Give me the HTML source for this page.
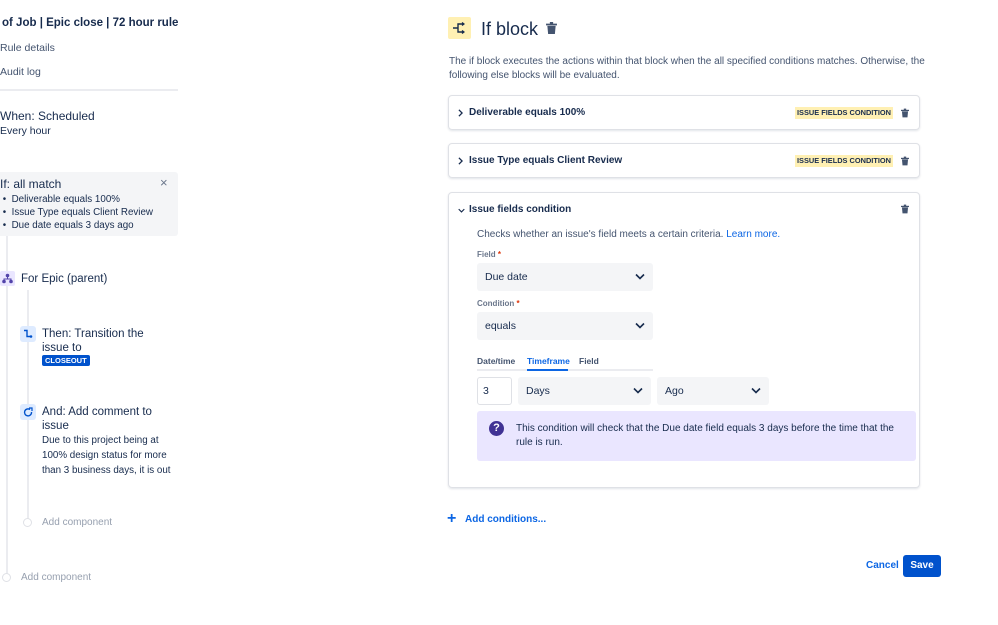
<!DOCTYPE html>
<html><head><meta charset="utf-8"><style>
*{box-sizing:border-box;margin:0;padding:0}
body{width:998px;height:625px;background:#fff;font-family:"Liberation Sans",sans-serif;color:#172b4d;position:relative;overflow:hidden}
.a{position:absolute;white-space:nowrap}
.s{font-size:10.5px;color:#44546f}
.card{position:absolute;left:448px;width:472px;border:1px solid #dfe1e6;border-radius:4px;box-shadow:0 1px 2px rgba(9,30,66,.12)}
.ct{position:absolute;left:20px;font-size:10px;font-weight:bold;color:#172b4d}
.badge{position:absolute;left:346px;width:98px;text-align:center;background:#fff0b3;font-size:7.4px;font-weight:bold;color:#172b4d;height:12px;line-height:12px}
.sel{position:absolute;background:#f4f5f7;border-radius:3px;font-size:10.5px;color:#172b4d;padding-left:8px}
.chev{position:absolute;right:8px;top:50%;margin-top:-4px}
.lbl{font-size:8px;font-weight:bold;color:#6b778c}
.ic{position:absolute;background:#deebff;border-radius:3px}
</style></head><body>
<svg width="0" height="0" style="position:absolute"><defs>
<symbol id="tr" viewBox="0 0 10 11"><rect x="0" y="1.5" width="10" height="1.6" fill="#44546f"/><rect x="3.5" y="0" width="3" height="2" fill="#44546f"/><path d="M1.2 3.5h7.6l-.7 7.5H1.9z" fill="#44546f"/></symbol>
<symbol id="dn" viewBox="0 0 10 6"><path d="M1 1l4 4 4-4" stroke="#172b4d" stroke-width="1.6" fill="none"/></symbol>
<symbol id="rt" viewBox="0 0 6 10"><path d="M1 1l4 4-4 4" stroke="#172b4d" stroke-width="1.6" fill="none"/></symbol>
</defs></svg>

<!-- left -->
<div class="a" style="left:2px;top:17px;font-size:11.5px;font-weight:bold">of Job | Epic close | 72 hour rule</div>
<div class="a s" style="left:0;top:42px">Rule details</div>
<div class="a s" style="left:0;top:66px">Audit log</div>
<div class="a" style="left:0;top:89px;width:178px;height:2px;background:#ebecf0"></div>
<div class="a" style="left:0;top:109px;font-size:12px;color:#172b4d">When: Scheduled</div>
<div class="a s" style="left:0;top:125px;color:#172b4d">Every hour</div>
<div class="a" style="left:0;top:172px;width:178px;height:64px;background:#f4f5f7;border-radius:0 3px 3px 0"></div>
<div class="a" style="left:0;top:177px;font-size:12px">If: all match</div>
<div class="a" style="left:160px;top:175px;font-size:13px;color:#6b778c">×</div>
<div class="a" style="left:0;top:193px;font-size:9.8px;line-height:13px;color:#172b4d">&nbsp;•&nbsp; Deliverable equals 100%<br>&nbsp;•&nbsp; Issue Type equals Client Review<br>&nbsp;•&nbsp; Due date equals 3 days ago</div>
<div class="a" style="left:6px;top:236px;width:2px;height:338px;background:#ebecf0"></div>
<div class="a" style="left:27px;top:290px;width:2px;height:229px;background:#ebecf0"></div>
<div class="a" style="left:0;top:271px;width:15px;height:15px;background:#eae6ff;border-radius:2px"></div>
<svg class="a" style="left:2px;top:273px" width="11" height="11" viewBox="0 0 11 11"><circle cx="5.5" cy="2.5" r="1.8" fill="#5243aa"/><circle cx="2" cy="8.5" r="1.8" fill="#5243aa"/><circle cx="9" cy="8.5" r="1.8" fill="#5243aa"/><path d="M5.5 3v3M2 8V6h7v2" stroke="#5243aa" fill="none"/></svg>
<div class="a" style="left:21px;top:273px;font-size:11.5px">For Epic (parent)</div>
<div class="ic" style="left:20px;top:326px;width:16px;height:16px"></div>
<svg class="a" style="left:23px;top:329px" width="10" height="10"><path d="M1 1.5h3v6h4" stroke="#0052cc" stroke-width="1.4" fill="none"/><circle cx="8" cy="7.5" r="1.3" fill="#0052cc"/></svg>
<div class="a" style="left:42px;top:327px;font-size:11.5px;line-height:14px">Then: Transition the<br>issue to</div>
<div class="a" style="left:42px;top:355px;background:#0052cc;color:#fff;font-size:7.5px;font-weight:bold;padding:1px 3px;border-radius:2px;line-height:9px">CLOSEOUT</div>
<div class="ic" style="left:20px;top:404px;width:16px;height:16px"></div>
<svg class="a" style="left:23px;top:407px" width="10" height="10"><path d="M7 2.5A3.5 3.5 0 1 0 8.5 5" stroke="#0052cc" stroke-width="1.4" fill="none"/><path d="M6 1h3v3" stroke="#0052cc" stroke-width="1.2" fill="none"/></svg>
<div class="a" style="left:42px;top:405px;font-size:11.5px;line-height:14px">And: Add comment to<br>issue</div>
<div class="a" style="left:42px;top:433px;font-size:9.8px;line-height:15px;color:#172b4d">Due to this project being at<br>100% design status for more<br>than 3 business days, it is out</div>
<div class="a" style="left:23px;top:518px;width:9px;height:9px;border:1px solid #dfe1e6;border-radius:50%;background:#fff"></div>
<div class="a" style="left:42px;top:517px;font-size:10px;color:#97a0af">Add component</div>
<div class="a" style="left:2px;top:573px;width:9px;height:9px;border:1px solid #dfe1e6;border-radius:50%;background:#fff"></div>
<div class="a" style="left:21px;top:572px;font-size:10px;color:#97a0af">Add component</div>

<!-- right -->
<div class="a" style="left:448px;top:17px;width:23px;height:22px;background:#fff0b3;border-radius:2px"></div>
<svg class="a" style="left:453px;top:22px" width="14" height="12"><path d="M0 6h5M5 6V2h5M5 6v4h5" stroke="#172b4d" stroke-width="1.4" fill="none"/><path d="M9 0.5l2 1.5-2 1.5M9 8.5l2 1.5-2 1.5" stroke="#172b4d" stroke-width="1.2" fill="none"/></svg>
<div class="a" style="left:481px;top:19px;font-size:18px;color:#172b4d">If block</div>
<svg class="a" style="left:546px;top:22px" width="11" height="12"><use href="#tr"/></svg>
<div class="a s" style="left:449px;top:55px;line-height:13.5px;font-size:10px">The if block executes the actions within that block when the all specified conditions matches. Otherwise, the<br>following else blocks will be evaluated.</div>

<div class="card" style="top:95px;height:35px">
<svg class="a" style="left:9px;top:13px" width="5" height="8"><use href="#rt"/></svg>
<div class="ct" style="top:11px">Deliverable equals 100%</div>
<div class="badge" style="top:11px">ISSUE FIELDS CONDITION</div>
<svg class="a" style="left:452px;top:12px" width="8" height="10"><use href="#tr"/></svg>
</div>
<div class="card" style="top:143px;height:35px">
<svg class="a" style="left:9px;top:13px" width="5" height="8"><use href="#rt"/></svg>
<div class="ct" style="top:11px">Issue Type equals Client Review</div>
<div class="badge" style="top:11px">ISSUE FIELDS CONDITION</div>
<svg class="a" style="left:452px;top:12px" width="8" height="10"><use href="#tr"/></svg>
</div>
<div class="card" style="top:192px;height:296px">
<svg class="a" style="left:9px;top:15px" width="7" height="5"><use href="#dn"/></svg>
<div class="ct" style="top:11px">Issue fields condition</div>
<svg class="a" style="left:452px;top:11px" width="8" height="10"><use href="#tr"/></svg>
<div class="a" style="left:28px;top:36px;font-size:10px;color:#44546f">Checks whether an issue's field meets a certain criteria. <span style="color:#0c66e4">Learn more.</span></div>
<div class="a lbl" style="left:28px;top:57px">Field <span style="color:#de350b">*</span></div>
<div class="sel" style="left:28px;top:70px;width:176px;height:28px;line-height:28px">Due date<svg class="chev" width="10" height="7"><use href="#dn"/></svg></div>
<div class="a lbl" style="left:28px;top:106px">Condition <span style="color:#de350b">*</span></div>
<div class="sel" style="left:28px;top:119px;width:176px;height:28px;line-height:28px">equals<svg class="chev" width="10" height="7"><use href="#dn"/></svg></div>
<div class="a" style="left:28px;top:163px;font-size:8.5px;font-weight:bold;color:#44546f">Date/time</div>
<div class="a" style="left:78px;top:163px;font-size:8.5px;font-weight:bold;color:#0c66e4">Timeframe</div>
<div class="a" style="left:130px;top:163px;font-size:8.5px;font-weight:bold;color:#44546f">Field</div>
<div class="a" style="left:28px;top:176px;width:176px;height:2px;background:#ebecf0"></div>
<div class="a" style="left:78px;top:176px;width:41px;height:2px;background:#0c66e4"></div>
<div class="a" style="left:28px;top:184px;width:35px;height:28px;border:1px solid #dfe1e6;border-radius:3px;font-size:10.5px;line-height:26px;padding-left:5px">3</div>
<div class="sel" style="left:69px;top:184px;width:133px;height:28px;line-height:28px">Days<svg class="chev" width="10" height="7"><use href="#dn"/></svg></div>
<div class="sel" style="left:208px;top:184px;width:112px;height:28px;line-height:28px">Ago<svg class="chev" width="10" height="7"><use href="#dn"/></svg></div>
<div class="a" style="left:28px;top:218px;width:439px;height:50px;background:#eae6ff;border-radius:3px"></div>
<div class="a" style="left:40px;top:228px;width:15px;height:15px;border-radius:50%;background:#403294;color:#fff;font-size:11px;font-weight:bold;text-align:center;line-height:15px">?</div>
<div class="a" style="left:67px;top:229px;font-size:10px;line-height:14px;color:#172b4d">This condition will check that the Due date field equals 3 days before the time that the<br>rule is run.</div>
</div>
<div class="a" style="left:447px;top:510px;font-size:16px;color:#0c66e4;font-weight:bold">+</div>
<div class="a" style="left:465px;top:514px;font-size:10px;font-weight:bold;color:#0c66e4">Add conditions...</div>
<div class="a" style="left:866px;top:560px;font-size:10px;font-weight:bold;color:#0c66e4">Cancel</div>
<div class="a" style="left:903px;top:555px;width:38px;height:22px;background:#0052cc;border-radius:3px;color:#fff;font-size:10px;font-weight:bold;text-align:center;line-height:22px">Save</div>
</body></html>
